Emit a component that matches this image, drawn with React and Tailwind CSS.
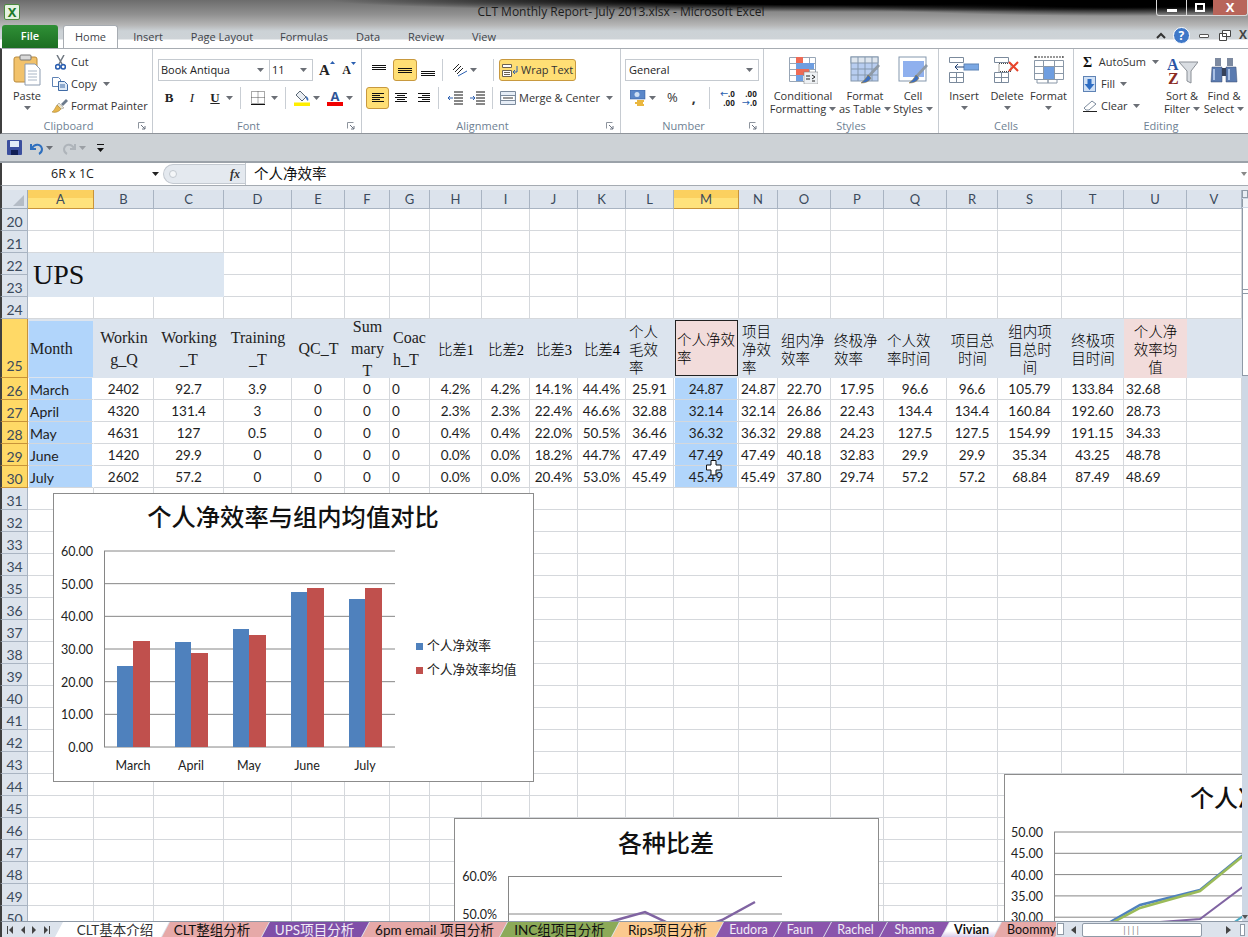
import React from "react";

const uiFont = "font-['Open_Sans','Noto_Sans_CJK_SC',sans-serif]";
const cellFont = "font-['Lato','Noto_Sans_CJK_SC',sans-serif]";
const serifFont = "font-['Liberation_Serif','Noto_Sans_CJK_SC',serif]";

const gridCols =
  "grid-cols-[28px_66px_60px_70px_68px_53px_45px_40px_52px_48px_48px_48px_48px_65px_39px_53px_53px_63px_51px_64px_62px_63px_55px]";
const letters = "ABCDEFGHIJKLMNOPQRSTUV".split("");

const headers = [
  { t: ["Month"], a: "left", bg: "sel" },
  { t: ["Workin", "g_Q"] },
  { t: ["Working", "_T"] },
  { t: ["Training", "_T"] },
  { t: ["QC_T"] },
  { t: ["Sum", "mary", "T"] },
  { t: ["Coac", "h_T"], a: "left" },
  { t: ["比差1"], cjk: true },
  { t: ["比差2"], cjk: true },
  { t: ["比差3"], cjk: true },
  { t: ["比差4"], cjk: true },
  { t: ["个人", "毛效", "率"], a: "left", cjk: true },
  { t: ["个人净效", "率"], a: "left", cjk: true, bg: "active" },
  { t: ["项目", "净效", "率"], a: "left", cjk: true },
  { t: ["组内净", "效率"], a: "left", cjk: true },
  { t: ["终极净", "效率"], a: "left", cjk: true },
  { t: ["个人效", "率时间"], a: "left", cjk: true },
  { t: ["项目总", "时间"], cjk: true },
  { t: ["组内项", "目总时", "间"], cjk: true },
  { t: ["终极项", "目时间"], cjk: true },
  { t: ["个人净", "效率均", "值"], cjk: true, bg: "pink" },
  { t: [] },
];

const data = {
  26: ["March", "2402", "92.7", "3.9", "0", "0", "0", "4.2%", "4.2%", "14.1%", "44.4%", "25.91", "24.87", "24.87", "22.70", "17.95", "96.6", "96.6", "105.79", "133.84", "32.68", ""],
  27: ["April", "4320", "131.4", "3", "0", "0", "0", "2.3%", "2.3%", "22.4%", "46.6%", "32.88", "32.14", "32.14", "26.86", "22.43", "134.4", "134.4", "160.84", "192.60", "28.73", ""],
  28: ["May", "4631", "127", "0.5", "0", "0", "0", "0.4%", "0.4%", "22.0%", "50.5%", "36.46", "36.32", "36.32", "29.88", "24.23", "127.5", "127.5", "154.99", "191.15", "34.33", ""],
  29: ["June", "1420", "29.9", "0", "0", "0", "0", "0.0%", "0.0%", "18.2%", "44.7%", "47.49", "47.49", "47.49", "40.18", "32.83", "29.9", "29.9", "35.34", "43.25", "48.78", ""],
  30: ["July", "2602", "57.2", "0", "0", "0", "0", "0.0%", "0.0%", "20.4%", "53.0%", "45.49", "45.49", "45.49", "37.80", "29.74", "57.2", "57.2", "68.84", "87.49", "48.69", ""],
};

const rows = [];
for (let r = 20; r <= 50; r++) rows.push(r);

function Caret({ className = "" }) {
  return (
    <svg width="7" height="4" viewBox="0 0 7 4" className={`shrink-0 ${className}`}>
      <path d="M0 0h7L3.5 4z" fill="#6b6f76" />
    </svg>
  );
}

function Divider() {
  return <div className="w-px h-[22px] bg-[#c9ced4] shrink-0" />;
}

function Launcher() {
  return (
    <svg width="8" height="8" viewBox="0 0 8 8" className="shrink-0">
      <path d="M.5.5h6M.5.5v6" stroke="#8e959e" fill="none" />
      <path d="M3 3l4 4M7 4v3H4" stroke="#6b7280" fill="none" />
    </svg>
  );
}

function Group({ label, launcher = true, className, children }) {
  return (
    <div className={`flex flex-col border-r border-[#c6cbd1] shrink-0 h-full ${className}`}>
      <div className="h-[69px] flex flex-col">{children}</div>
      <div className={`flex items-center h-[15px] ${launcher ? "pr-[6px]" : ""}`}>
        <div className={`flex-1 text-center text-[11px] leading-none text-[#6e7f93] ${launcher ? "pr-[3px]" : ""} ${uiFont}`}>{label}</div>
        {launcher && <Launcher />}
      </div>
    </div>
  );
}

function BigButton({ w, lines, caret = true, children }) {
  return (
    <div className={`flex flex-col items-center pt-[6px] shrink-0 ${w}`}>
      <div className="h-[30px] flex items-center justify-center">{children}</div>
      <div className={`mt-[4px] text-[11px] leading-[13px] text-[#333] text-center whitespace-nowrap ${uiFont}`}>
        {lines.map((l, i) => (
          <div key={i} className="flex items-center justify-center gap-[3px]">
            {l}
            {caret && lines.length > 1 && i === lines.length - 1 && <Caret />}
          </div>
        ))}
      </div>
      {caret && lines.length === 1 && <Caret className="mt-[4px]" />}
    </div>
  );
}

function AlignIcon({ kind }) {
  const w = [12, 8, 12, 8, 12];
  return (
    <svg width="14" height="12" viewBox="0 0 14 12">
      {w.map((x, i) => {
        const start = kind === "left" ? 1 : kind === "center" ? 7 - x / 2 : 13 - x;
        return <rect key={i} x={start} y={1 + i * 2} width={x} height="1" fill="#111" />;
      })}
    </svg>
  );
}

function VAlignIcon({ pos }) {
  const top = pos === "top" ? 1 : pos === "mid" ? 4 : 7;
  return (
    <svg width="14" height="12" viewBox="0 0 14 12">
      {[0, 2, 4].map((d) => (
        <rect key={d} x="0" y={top + d} width="14" height="1" fill="#111" />
      ))}
    </svg>
  );
}

function PasteIcon() {
  return (
    <svg width="28" height="32" viewBox="0 0 28 32">
      <rect x="1" y="3" width="23" height="25" rx="2" fill="#f2c26b" stroke="#b98a3c" />
      <rect x="7" y="1" width="11" height="5" rx="1" fill="#d9d9d9" stroke="#777" />
      <path d="M12 10h10l5 5v16H12z" fill="#fff" stroke="#8c9bb0" />
      <path d="M15 17h9M15 20h9M15 23h9M15 26h9" stroke="#a9b6c6" />
    </svg>
  );
}

function CutIcon() {
  return (
    <svg width="11" height="15" viewBox="0 0 11 15">
      <path d="M2 0l5 9M9 0L4 9" stroke="#6f7780" strokeWidth="1.5" />
      <circle cx="2.800" cy="11.800" r="2.200" fill="none" stroke="#2b5fb0" strokeWidth="1.600" />
      <circle cx="8.200" cy="11.800" r="2.200" fill="none" stroke="#2b5fb0" strokeWidth="1.600" />
    </svg>
  );
}

function CopyIcon() {
  return (
    <svg width="16" height="14" viewBox="0 0 16 14">
      <path d="M.5.5h6l2 2v7h-8z" fill="#fff" stroke="#5f83b5" />
      <path d="M6.5 4.5h6l3 3v6h-9z" fill="#dfeaf7" stroke="#3f6aa5" />
      <path d="M8 8h5M8 10h5" stroke="#3f6aa5" />
    </svg>
  );
}

function BrushIcon() {
  return (
    <svg width="16" height="14" viewBox="0 0 16 14">
      <path d="M9 5l5-5 2 2-5 5z" fill="#6c7b8c" />
      <path d="M7 4l5 5-3 1-4-4z" fill="#e9e3cf" stroke="#888" strokeWidth=".5" />
      <path d="M5 6l4 4c-2 3-6 4-9 3 2-1 3-4 5-7z" fill="#e7b64e" stroke="#a37b22" strokeWidth=".5" />
    </svg>
  );
}

function BordersIcon() {
  return (
    <svg width="14" height="14" viewBox="0 0 14 14">
      <path d="M.5.5h13v12h-13zM7 .5v12M.5 6.5h13" stroke="#555" strokeDasharray="1 1" fill="none" />
      <path d="M0 13.5h14" stroke="#111" />
    </svg>
  );
}

function FillIcon() {
  return (
    <svg width="16" height="16" viewBox="0 0 16 16">
      <path d="M6 1l6 6-4 4-6-6z" fill="#e9edf2" stroke="#5b6875" />
      <path d="M12 6c2 1 3 3 2 5-2-1-2-3-2-5z" fill="#3f6fb5" />
      <rect y="12.500" width="16" height="3.500" fill="#ffee00" />
    </svg>
  );
}

function CondIcon() {
  return (
    <svg width="30" height="28" viewBox="0 0 30 28">
      <path d="M1.5 1.5h26v24h-26zM1.5 7.5h26M1.5 13.5h26M1.5 19.5h26M8.5 1.500v24M14.5 1.500v24M21.5 1.500v24" fill="#fff" stroke="#98a6b6" />
      <rect x="8" y="1" width="7" height="6" fill="#ee6a55" />
      <rect x="8" y="7" width="18" height="6" fill="#6f9ee0" />
      <rect x="8" y="13" width="13" height="6" fill="#ee6a55" />
      <rect x="8" y="19" width="7" height="6" fill="#6f9ee0" />
      <rect x="16" y="16" width="14" height="12" fill="#eef1f4" stroke="#777" strokeWidth=".5" />
      <path d="M18 20h4M18 23h4M24 19l3 2-3 2M24 25h3" stroke="#222" fill="none" />
    </svg>
  );
}

function TableIcon() {
  return (
    <svg width="30" height="28" viewBox="0 0 30 28">
      <rect x="1" y="1" width="27" height="24" fill="#b8cdf0" stroke="#8497ad" />
      <rect x="1" y="1" width="27" height="6" fill="#dfe6ee" stroke="#8497ad" />
      <path d="M1 13h27M1 19h27M8 1v24M15 1v24M22 1v24" stroke="#8497ad" />
      <path d="M30 10L19 22l-2-2L28 8z" fill="#8e99a5" />
      <path d="M18 19l3 3c-2 4-6 5-10 5 3-2 5-5 7-8z" fill="#3d6fc0" stroke="#a37b22" strokeWidth=".5" />
    </svg>
  );
}

function CellStyleIcon() {
  return (
    <svg width="30" height="28" viewBox="0 0 30 28">
      <rect x="1" y="1" width="27" height="24" fill="#fff" stroke="#8497ad" />
      <rect x="5" y="5" width="21" height="16" fill="#8fb0ee" />
      <path d="M30 10L19 22l-2-2L28 8z" fill="#8e99a5" />
      <path d="M18 19l3 3c-2 4-6 5-10 5 3-2 5-5 7-8z" fill="#3d6fc0" stroke="#a37b22" strokeWidth=".5" />
    </svg>
  );
}

function InsertIcon() {
  return (
    <svg width="30" height="26" viewBox="0 0 30 26">
      <path d="M.5.5h14v5H.5zM.5 15.500h14v10H.5zM7.500 15.500v10M.5 20.500h14" fill="#fff" stroke="#7b8a9c" />
      <rect x="15" y="7" width="15" height="6" fill="#7aa7e3" stroke="#5e84b5" />
      <path d="M15 10H6m3-3l-3 3 3 3" stroke="#1f3f70" fill="none" />
    </svg>
  );
}

function DeleteIcon() {
  return (
    <svg width="26" height="26" viewBox="0 0 26 26">
      <path d="M.5.5h14v5H.5zM.5 15.500h14v10H.5zM7.500 15.500v10M.5 20.500h14" fill="#fff" stroke="#7b8a9c" />
      <rect x="5" y="6.500" width="12" height="8" fill="none" stroke="#444" strokeDasharray="1 1" />
      <path d="M15 5l9 9M24 5l-9 9" stroke="#e8432a" strokeWidth="2" />
    </svg>
  );
}

function FormatIcon() {
  return (
    <svg width="30" height="28" viewBox="0 0 30 28">
      <path d="M1 1h28M1 0v3M29 0v3" stroke="#333" strokeDasharray="2 1" />
      <path d="M.5 4.500h29v19H.5zM.5 10.500h29M.5 17.500h29M9.500 4.500v19M20.500 4.500v19" fill="#fff" stroke="#8a98a8" />
      <rect x="10" y="11" width="10" height="12" fill="#6f9ee0" />
      <path d="M3 24v3h11v-3M14 24v3h9v-3" fill="none" stroke="#8a98a8" />
    </svg>
  );
}

function SortIcon() {
  return (
    <svg width="31" height="29" viewBox="0 0 31 29">
      <path d="M12 6h19l-7 9v12l-4-2V15z" fill="#d9dde2" stroke="#8a8f96" />
      <text x="0" y="14" fontSize="16" fontWeight="700" fill="#2a55a5" className={serifFont}>A</text>
      <text x="1" y="28" fontSize="16" fontWeight="700" fill="#8a2a22" className={serifFont}>Z</text>
    </svg>
  );
}

function BinocularIcon() {
  return (
    <svg width="28" height="26" viewBox="0 0 28 26">
      <path d="M5 1h6v8H5zM17 1h6v8h-6z" fill="#7d8aa0" />
      <path d="M2 10h10v15H1zM16 10h10l1 15H16z" fill="#5b7bb0" stroke="#3c4f70" strokeWidth=".5" />
      <rect x="12" y="11" width="4" height="8" fill="#36425a" />
      <path d="M4 12v11M19 12v11" stroke="#a9c0e4" strokeWidth="2" />
    </svg>
  );
}

function Ribbon() {
  return (
    <div className="flex h-[87px] bg-white border-l-2 border-l-[#3f3f3f] border-t border-t-[#a7acb2] border-b border-b-[#8f949a]">
      <Group label="Clipboard" className="w-[151px]">
        <div className="flex">
          <BigButton w="w-[50px]" lines={["Paste"]}>
            <PasteIcon />
          </BigButton>
          <div className={`flex flex-col pt-[2px] text-[11px] text-[#333] ${uiFont}`}>
            <div className="h-[22px] flex items-center pl-[3px]"><CutIcon /><span className="ml-[5px]">Cut</span></div>
            <div className="h-[22px] flex items-center gap-[3px]"><CopyIcon /><span>Copy</span><Caret className="ml-[3px]" /></div>
            <div className="h-[22px] flex items-center gap-[3px]"><BrushIcon /><span className="whitespace-nowrap">Format Painter</span></div>
          </div>
        </div>
      </Group>
      <Group label="Font" className="w-[209px]">
        <div className="flex items-center pl-[5px] pt-[10px] h-[32px]">
          <div className={`w-[112px] h-[22px] border border-[#c5cad0] flex items-center pl-[2px] pr-[5px] text-[11px] text-[#222] ${uiFont}`}>
            <span className="flex-1">Book Antiqua</span><Caret />
          </div>
          <div className={`w-[43px] h-[22px] border border-l-0 border-[#c5cad0] flex items-center pl-[2px] pr-[5px] text-[11px] text-[#222] ${uiFont}`}>
            <span className="flex-1">11</span><Caret />
          </div>
          <div className={`ml-[3px] w-[22px] flex justify-center text-[15px] font-bold text-[#222] ${serifFont}`}>
            A<svg width="5" height="3" viewBox="0 0 5 3" className="mt-[2px]"><path d="M0 3h5L2.500 0z" fill="#2b5fb0" /></svg>
          </div>
          <div className={`w-[22px] flex justify-center text-[12px] font-bold text-[#222] ${serifFont}`}>
            A<svg width="5" height="3" viewBox="0 0 5 3" className="mt-[1px]"><path d="M0 0h5L2.500 3z" fill="#2b5fb0" /></svg>
          </div>
        </div>
        <div className="flex items-center h-[22px] mt-[6px] pl-[10px] text-[#222]">
          <span className={`w-[12px] text-center text-[13px] font-bold ${serifFont}`}>B</span>
          <span className={`ml-[11px] w-[12px] text-center text-[13px] italic ${serifFont}`}>I</span>
          <span className={`ml-[11px] w-[12px] text-center text-[13px] font-bold underline ${serifFont}`}>U</span>
          <Caret className="ml-[5px]" />
          <div className="ml-[7px]"><Divider /></div>
          <div className="ml-[10px]"><BordersIcon /></div>
          <Caret className="ml-[6px]" />
          <div className="ml-[7px]"><Divider /></div>
          <div className="ml-[8px]"><FillIcon /></div>
          <Caret className="ml-[3px]" />
          <div className="ml-[7px] w-[16px] flex flex-col items-center">
            <span className={`text-[13px] leading-[12px] font-bold text-[#2f5597] ${uiFont}`}>A</span>
            <div className="w-[16px] h-[4px] bg-[#f00000]" />
          </div>
          <Caret className="ml-[3px]" />
        </div>
      </Group>
      <Group label="Alignment" className="w-[259px]">
        <div className="flex items-center pt-[10px] h-[32px]">
          <div className="w-[28px] ml-[3px] flex justify-center"><VAlignIcon pos="top" /></div>
          <div className="w-[24px] h-[22px] flex items-center justify-center bg-[#ffdf75] border border-[#c8993f] rounded-[3px]"><VAlignIcon pos="mid" /></div>
          <div className="w-[22px] flex justify-center"><VAlignIcon pos="bot" /></div>
          <div className="ml-[3px]"><Divider /></div>
          <svg width="16" height="14" viewBox="0 0 16 14" className="ml-[9px]">
            <path d="M1 7l6-6M3 9l6-6M5 11l6-6" stroke="#222" />
            <path d="M6 13l9-5" stroke="#2b5fb0" />
          </svg>
          <Caret className="ml-[2px]" />
          <div className="ml-[16px]"><Divider /></div>
          <div className={`ml-[5px] w-[77px] h-[22px] flex items-center gap-[3px] pl-[2px] bg-[#ffdf75] border border-[#c8993f] rounded-[3px] text-[11px] text-[#333] ${uiFont}`}>
            <svg width="16" height="14" viewBox="0 0 16 14">
              <path d="M.5 1.500h9v3h-9zM.5 7.500h9v6h-9zM2 9.500h6M2 11.500h6" fill="#fff" stroke="#6b6250" />
              <path d="M15 3v6h-4m2-2l-2 2 2 2" fill="none" stroke="#2b5fb0" />
            </svg>
            <span className="whitespace-nowrap">Wrap Text</span>
          </div>
        </div>
        <div className="flex items-center h-[22px] mt-[6px]">
          <div className="ml-[4px] w-[23px] h-[22px] flex items-center justify-center bg-[#ffdf75] border border-[#c8993f] rounded-[3px]"><AlignIcon kind="left" /></div>
          <div className="ml-[4px] w-[16px] flex justify-center"><AlignIcon kind="center" /></div>
          <div className="ml-[7px] w-[16px] flex justify-center"><AlignIcon kind="right" /></div>
          <div className="ml-[6px]"><Divider /></div>
          <svg width="16" height="14" viewBox="0 0 16 14" className="ml-[9px]">
            <path d="M6 1h9M6 4h9M6 7h9M6 10h9M6 13h9" stroke="#111" />
            <path d="M5 7H0m2-2L0 7l2 2" stroke="#2b5fb0" fill="none" />
          </svg>
          <svg width="16" height="14" viewBox="0 0 16 14" className="ml-[6px]">
            <path d="M6 1h9M6 4h9M6 7h9M6 10h9M6 13h9" stroke="#111" />
            <path d="M0 7h5M3 5l2 2-2 2" stroke="#2b5fb0" fill="none" />
          </svg>
          <div className="ml-[6px]"><Divider /></div>
          <div className={`ml-[7px] flex items-center gap-[3px] text-[11px] text-[#333] ${uiFont}`}>
            <svg width="16" height="14" viewBox="0 0 16 14">
              <path d="M.5.5h15v13H.5zM.5 4.500h15M.5 9.500h15" fill="#e6edf6" stroke="#7b8a9c" />
              <rect x="2" y="5" width="12" height="4" fill="#fff" />
              <path d="M3 7h10" stroke="#333" />
            </svg>
            <span className="whitespace-nowrap">Merge &amp; Center</span>
            <Caret className="ml-[3px]" />
          </div>
        </div>
      </Group>
      <Group label="Number" className="w-[143px]">
        <div className="flex items-center pl-[4px] pt-[10px] h-[32px]">
          <div className={`w-[134px] h-[22px] border border-[#c5cad0] flex items-center pl-[3px] pr-[5px] text-[11px] text-[#222] ${uiFont}`}>
            <span className="flex-1">General</span><Caret />
          </div>
        </div>
        <div className="flex items-center h-[22px] mt-[6px] pl-[9px]">
          <svg width="16" height="16" viewBox="0 0 16 16">
            <rect x="0" y="0" width="15" height="9" fill="#5b87c9" stroke="#2f5597" strokeWidth=".5" />
            <circle cx="7" cy="4.500" r="2.500" fill="#cfe0f5" />
            <path d="M7 10h7v2H7zM5 12h8v2H5zM7 14h7v2H7z" fill="#eab73f" />
          </svg>
          <Caret className="ml-[3px]" />
          <span className={`ml-[11px] text-[13px] text-[#333] ${uiFont}`}>%</span>
          <span className={`ml-[14px] text-[14px] leading-[14px] font-bold text-[#333] ${uiFont}`}>,</span>
          <div className="ml-[13px]"><Divider /></div>
          <div className={`ml-[8px] w-[17px] text-[8px] leading-[9px] font-bold text-[#222] text-right ${uiFont}`}>
            <div><span className="text-[#2b5fb0]">←</span>.0</div><div>.00</div>
          </div>
          <div className={`ml-[5px] w-[17px] text-[8px] leading-[9px] font-bold text-[#222] text-right ${uiFont}`}>
            <div>.00</div><div><span className="text-[#2b5fb0]">→</span>.0</div>
          </div>
        </div>
      </Group>
      <Group label="Styles" launcher={false} className="w-[175px]">
        <div className="flex pl-[2px]">
          <BigButton w="w-[74px]" lines={["Conditional", "Formatting"]}><CondIcon /></BigButton>
          <BigButton w="w-[50px]" lines={["Format", "as Table"]}><TableIcon /></BigButton>
          <BigButton w="w-[46px]" lines={["Cell", "Styles"]}><CellStyleIcon /></BigButton>
        </div>
      </Group>
      <Group label="Cells" launcher={false} className="w-[135px]">
        <div className="flex pl-[4px]">
          <BigButton w="w-[42px]" lines={["Insert"]}><InsertIcon /></BigButton>
          <BigButton w="w-[44px]" lines={["Delete"]}><DeleteIcon /></BigButton>
          <BigButton w="w-[39px]" lines={["Format"]}><FormatIcon /></BigButton>
        </div>
      </Group>
      <Group label="Editing" launcher={false} className="flex-1 !border-r-0">
        <div className="flex">
          <div className={`flex flex-col pt-[2px] pl-[9px] w-[85px] text-[11px] text-[#333] ${uiFont}`}>
            <div className="h-[22px] flex items-center">
              <span className={`w-[18px] text-[14px] font-bold text-[#111] ${serifFont}`}>Σ</span>
              <span>AutoSum</span><Caret className="ml-[6px]" />
            </div>
            <div className="h-[22px] flex items-center">
              <div className="w-[18px]">
                <svg width="13" height="16" viewBox="0 0 13 16">
                  <rect x=".5" y=".5" width="12" height="15" fill="#cfe0f5" stroke="#5f83b5" />
                  <path d="M4.500 3h4v5h3l-5 6-5-6h3z" fill="#2f6ec4" />
                </svg>
              </div>
              <span>Fill</span><Caret className="ml-[5px]" />
            </div>
            <div className="h-[22px] flex items-center">
              <div className="w-[18px]">
                <svg width="14" height="12" viewBox="0 0 14 12">
                  <path d="M9 1l4 3-7 6H3L1 8z" fill="#fff" stroke="#7b8a9c" />
                  <path d="M0 11.500h14" stroke="#222" />
                </svg>
              </div>
              <span>Clear</span><Caret className="ml-[5px]" />
            </div>
          </div>
          <BigButton w="w-[46px]" lines={["Sort &", "Filter"]}><SortIcon /></BigButton>
          <BigButton w="w-[38px]" lines={["Find &", "Select"]}><BinocularIcon /></BigButton>
        </div>
      </Group>
    </div>
  );
}

function TitleArea() {
  return (
    <div className="h-[48px] flex flex-col bg-[radial-gradient(ellipse_520px_12px_at_68%_0%,#000_40%,#0000_100%),radial-gradient(ellipse_320px_16px_at_90%_0%,#000_45%,#0000_100%),linear-gradient(180deg,#6c6c6c_0px,#8f8f8f_14px,#b5b5b5_25px,#ccd2d6_31px,#ced3d7_39px,#fff_40px)]">
      <div className="h-[25px] flex items-start">
        <div className="w-[16px] h-[16px] mt-[4px] ml-[4px] bg-[#e6f2e2] border border-[#4c8a3f] text-[#1d7a2c] text-[13px] leading-[14px] font-bold text-center rounded-[2px]">X</div>
        <div className={`flex-1 text-center pl-[66px] pt-[3px] text-[12px] text-[#1c1c1c] ${uiFont}`}>CLT Monthly Report- July 2013.xlsx  -  Microsoft Excel</div>
        <div className="flex w-[92px] h-[16px] border border-t-0 border-[#d9d9d9] rounded-b-[3px] text-white">
          <div className="w-[29px] flex items-end justify-center pb-[3px]"><div className="w-[10px] h-[3px] bg-white" /></div>
          <div className="w-[27px] flex items-center justify-center border-l border-[#d9d9d9]"><div className="w-[10px] h-[9px] border-2 border-white" /></div>
          <div className="flex-1 flex items-center justify-center bg-[#b8655a] rounded-br-[3px] text-[13px] font-bold leading-none">X</div>
        </div>
      </div>
      <div className={`h-[23px] flex items-end text-[11px] text-[#3f444a] ${uiFont}`}>
        <div className="ml-[2px] w-[56px] h-[23px] flex items-center justify-center rounded-t-[3px] bg-[linear-gradient(180deg,#2f8f36,#1c6e22)] text-white font-semibold">File</div>
        <div className="ml-[5px] w-[55px] h-[23px] flex items-center justify-center rounded-t-[3px] bg-white border border-b-0 border-[#a7acb2]">Home</div>
        <div className="w-[60px] h-[23px] flex items-start pt-[4px] justify-center">Insert</div>
        <div className="w-[88px] h-[23px] flex items-start pt-[4px] justify-center">Page Layout</div>
        <div className="w-[76px] h-[23px] flex items-start pt-[4px] justify-center">Formulas</div>
        <div className="w-[52px] h-[23px] flex items-start pt-[4px] justify-center">Data</div>
        <div className="w-[64px] h-[23px] flex items-start pt-[4px] justify-center">Review</div>
        <div className="w-[52px] h-[23px] flex items-start pt-[4px] justify-center">View</div>
        <div className="ml-auto h-[23px] flex items-start pt-[2px] pr-[1px]">
          <svg width="10" height="8" viewBox="0 0 10 8" className="mt-[5px]"><path d="M1 6l4-4 4 4" fill="none" stroke="#333" strokeWidth="2" /></svg>
          <div className="ml-[7px] w-[17px] h-[17px] rounded-full bg-[#3f78c8] border border-white text-white text-[12px] leading-[15px] font-bold text-center">?</div>
          <div className="ml-[9px] mt-[7px] w-[10px] h-[4px] bg-white border border-[#555] rounded-[1px]" />
          <svg width="12" height="11" viewBox="0 0 12 11" className="ml-[10px] mt-[3px]">
            <path d="M3.500.5h8v6h-8zM.5 3.500h7v7h-7z" fill="#fff" stroke="#444" />
          </svg>
          <span className="ml-[8px] text-[12px] font-bold text-[#444] leading-[16px]">X</span>
        </div>
      </div>
    </div>
  );
}

function Toolbar() {
  return (
    <div className="h-[29px] flex items-center bg-[#cdd2d6] border-b-2 border-b-[#9ba2a9] pl-[7px]">
      <svg width="15" height="15" viewBox="0 0 15 15">
        <rect width="15" height="15" rx="1" fill="#3c4f9e" />
        <rect x="3" y="1" width="9" height="6" fill="#e4ecf7" />
        <rect x="4" y="10" width="7" height="5" fill="#111f55" />
      </svg>
      <svg width="15" height="14" viewBox="0 0 15 14" className="ml-[7px]">
        <path d="M2 3v5h5M3 7c3-5 9-4 10 1 0 2-1 4-3 5" fill="none" stroke="#2e6fbe" strokeWidth="2" />
      </svg>
      <Caret className="ml-[2px]" />
      <svg width="15" height="14" viewBox="0 0 15 14" className="ml-[9px]">
        <path d="M13 3v5H8M12 7C9 2 3 3 2 8c0 2 1 4 3 5" fill="none" stroke="#aeb4ba" strokeWidth="2" />
      </svg>
      <Caret className="ml-[2px] opacity-50" />
      <svg width="7" height="8" viewBox="0 0 7 8" className="ml-[11px]">
        <path d="M0 .5h7" stroke="#111" /><path d="M0 4h7L3.500 8z" fill="#111" />
      </svg>
    </div>
  );
}

function FormulaBar() {
  return (
    <div className="h-[23px] flex items-center bg-white border-b border-b-[#a5abb2] border-l-2 border-l-[#3f3f3f]">
      <div className={`w-[161px] flex items-center text-[12.5px] text-[#222] ${uiFont}`}>
        <span className="ml-[49px]">6R x 1C</span>
        <svg width="7" height="4" viewBox="0 0 7 4" className="ml-auto mr-[4px]"><path d="M0 0h7L3.500 4z" fill="#222" /></svg>
      </div>
      <div className="w-[82px] h-[20px] flex items-center bg-[#e4e9ef] border-l border-y border-[#c3c9d0] rounded-l-[10px] pl-[5px]">
        <div className="w-[8px] h-[8px] rounded-full bg-[#f4f6f8] border border-[#c3c9d0]" />
        <span className={`ml-auto mr-[5px] text-[12px] italic font-bold text-[#333] ${serifFont}`}>fx</span>
      </div>
      <div className="w-px h-full bg-[#c3c9d0]" />
      <div className={`pl-[8px] text-[14.5px] text-[#111] ${cellFont}`}>个人净效率</div>
      <svg width="6" height="4" viewBox="0 0 6 4" className="ml-auto mr-[1px]"><path d="M0 0h6L3 4z" fill="#888" /></svg>
    </div>
  );
}

function ColumnHeaders() {
  return (
    <>
      <div className="h-[19px] bg-[#dce3ec] border-r border-b border-[#9eaab8] border-l-2 border-l-[#3f3f3f] flex items-end justify-end pr-[3px] pb-[2px]">
        <svg width="11" height="11" viewBox="0 0 11 11"><path d="M11 0v11H0z" fill="#b4bcc6" /></svg>
      </div>
      {letters.map((l) => {
        const sel = l === "A" || l === "M";
        return (
          <div
            key={l}
            className={`h-[19px] pt-[1px] border-r border-b flex items-center justify-center text-[13px] text-[#3b4a5c] ${cellFont} ${
              sel
                ? "bg-[linear-gradient(180deg,#fbd05f_45%,#ffe27c_45%)] border-[#c8933a]"
                : "bg-[#dce3ec] border-[#a9b4c2]"
            }`}
          >
            {l}
          </div>
        );
      })}
    </>
  );
}

function HeaderCell({ h, i }) {
  const base = h.bg === "pink" ? "bg-[#f2dcdb]" : "bg-[#dce4ee]";
  const align = h.a === "left" ? "items-start pl-[3px]" : "items-center";
  const lineCls = h.cjk
    ? "text-[14.5px] leading-[18px] font-light text-black pt-[2px]"
    : "text-[16px] leading-[22px] text-[#222]";
  const inner = h.t.map((line, n) => <div key={n} className="whitespace-nowrap">{line}</div>);
  if (i === 0) {
    return (
      <div className={`h-[59px] ${base} border-b border-[#dce4ee] pl-[1px] pr-[1px] pt-[2px]`}>
        <div className={`h-full bg-[#b1d5fb] flex items-center pl-[1px] ${serifFont} text-[16px] text-[#222]`}>Month</div>
      </div>
    );
  }
  if (h.bg === "active") {
    return (
      <div className={`h-[59px] ${base} flex items-center pl-[1px] pr-[1px]`}>
        <div className={`w-full h-[56px] mt-[-1px] bg-[#f2dcdb] border border-[#222] flex flex-col justify-center pl-[1px] ${serifFont} ${lineCls}`}>{inner}</div>
      </div>
    );
  }
  return (
    <div className={`h-[59px] ${base} flex flex-col justify-center ${align} ${serifFont} ${lineCls}`}>{inner}</div>
  );
}

function Sheet() {
  return (
    <div className={`grid ${gridCols} w-[1242px] bg-white`}>
      <ColumnHeaders />
      {rows.map((r) => {
        const sel = r >= 25 && r <= 30;
        const h = r === 25 ? "h-[59px]" : "h-[22px]";
        const label = (
          <div
            key={`l${r}`}
            className={`${h} border-r border-b border-l-2 border-l-[#3f3f3f] flex justify-center text-[14px] text-[#3b4a5c] ${cellFont} ${
              r === 25 ? "items-end pb-[1px]" : "items-center pt-[3px]"
            } ${sel ? "bg-[#ffd966] border-r-[#c8933a] border-b-[#c8933a]" : "bg-[#dce3ec] border-r-[#a9b4c2] border-b-[#a9b4c2]"}`}
          >
            {r}
          </div>
        );
        if (r === 25) {
          return (
            <React.Fragment key={r}>
              {label}
              {headers.map((c, i) => <HeaderCell key={i} h={c} i={i} />)}
            </React.Fragment>
          );
        }
        if (data[r]) {
          return (
            <React.Fragment key={r}>
              {label}
              {data[r].map((v, i) => {
                const col = letters[i];
                if (col === "A" || col === "M") {
                  return (
                    <div key={i} className={`${h} border-r border-b ${col === "A" ? "border-r-white" : "border-r-[#d5d8dc]"} border-b-[#d5d8dc] pl-[1px] pr-[1px] bg-white`}>
                      <div className={`h-full pt-[2px] bg-[#b1d5fb] flex items-center text-[13.5px] text-[#1e1e1e] ${cellFont} ${col === "M" ? "justify-center" : "pl-[1px] text-[14px]"}`}>{v}</div>
                    </div>
                  );
                }
                const left = col === "G" || col === "U" || col === "N";
                return (
                  <div key={i} className={`${h} pt-[2px] border-r border-b border-[#d5d8dc] flex items-center text-[13.5px] text-[#1e1e1e] ${cellFont} ${left ? "pl-[2px]" : "justify-center"}`}>
                    {v}
                  </div>
                );
              })}
            </React.Fragment>
          );
        }
        if (r === 22) {
          return (
            <React.Fragment key={r}>
              {label}
              <div className={`col-span-3 row-span-2 bg-[#dce6f1] flex items-center pl-[5px] text-[28px] text-[#111] ${serifFont}`}>UPS</div>
              {letters.slice(3).map((c) => <div key={c} className={`${h} border-r border-b border-[#d5d8dc]`} />)}
            </React.Fragment>
          );
        }
        const cells = r === 23 ? letters.slice(3) : letters;
        return (
          <React.Fragment key={r}>
            {label}
            {cells.map((c) => <div key={c} className={`${h} border-r border-b border-[#d5d8dc]`} />)}
          </React.Fragment>
        );
      })}
    </div>
  );
}

const barData = [
  { x: 117, a: 666, b: 641, c: "March" },
  { x: 175, a: 642, b: 653, c: "April" },
  { x: 233, a: 629, b: 635, c: "May" },
  { x: 291, a: 592, b: 588, c: "June" },
  { x: 349, a: 599, b: 588, c: "July" },
];
const chartFont = { fontFamily: "Lato, 'Noto Sans CJK SC', sans-serif" };

function BarChart() {
  const ticks = ["60.00", "50.00", "40.00", "30.00", "20.00", "10.00", "0.00"];
  return (
    <div className="absolute left-[53px] top-[303px] w-[481px] h-[289px] bg-white border border-[#8c8c8c]">
      <svg width="479" height="287" viewBox="54 494 479 287" style={chartFont}>
        <text x="293" y="526" textAnchor="middle" fontSize="24.300" fill="#111" fontWeight="500">个人净效率与组内均值对比</text>
        {ticks.map((t, i) => {
          const y = 551 + i * 32.67;
          return (
            <g key={t}>
              <line x1="104" x2="395" y1={y} y2={y} stroke="#868686" />
              <text x="93" y={y + 5} textAnchor="end" fontSize="12.500" fill="#222">{t}</text>
            </g>
          );
        })}
        <line x1="104.500" x2="104.500" y1="551" y2="747" stroke="#868686" />
        {barData.map((b) => (
          <g key={b.c}>
            <rect x={b.x} y={b.a} width="16" height={747 - b.a} fill="#4f81bd" />
            <rect x={b.x + 16} y={b.b} width="17" height={747 - b.b} fill="#c0504d" />
            <text x={b.x + 16} y="770" textAnchor="middle" fontSize="12.500" fill="#222">{b.c}</text>
          </g>
        ))}
        <rect x="416" y="643" width="7" height="7" fill="#4f81bd" />
        <text x="427" y="650" fontSize="12.800" fill="#222">个人净效率</text>
        <rect x="416" y="667" width="7" height="7" fill="#c0504d" />
        <text x="427" y="674" fontSize="12.800" fill="#222">个人净效率均值</text>
      </svg>
    </div>
  );
}

function RatioChart() {
  return (
    <div className="absolute left-[454px] top-[628px] w-[425px] h-[120px] bg-white border border-[#8c8c8c]">
      <svg width="423" height="118" viewBox="455 819 423 118" style={chartFont}>
        <text x="666" y="852" textAnchor="middle" fontSize="24" fill="#111" fontWeight="500">各种比差</text>
        <text x="497" y="881" textAnchor="end" fontSize="12.500" fill="#222">60.0%</text>
        <text x="497" y="919" textAnchor="end" fontSize="12.500" fill="#222">50.0%</text>
        <line x1="508" x2="782" y1="876.500" y2="876.500" stroke="#868686" />
        <line x1="508" x2="782" y1="914" y2="914" stroke="#868686" />
        <line x1="508.500" x2="508.500" y1="876" y2="925" stroke="#868686" />
        <polyline points="600,925 620,919 645,912 668,923" fill="none" stroke="#8064a2" strokeWidth="2.500" />
        <polyline points="708,925 722,920 755,902" fill="none" stroke="#8064a2" strokeWidth="2.500" />
      </svg>
    </div>
  );
}

function TrendChart() {
  const ticks = ["50.00", "45.00", "40.00", "35.00", "30.00"];
  return (
    <div className="absolute left-[1004px] top-[584px] w-[260px] h-[170px] bg-white border border-[#8c8c8c]">
      <svg width="258" height="168" viewBox="1005 775 258 168" style={chartFont}>
        <text x="1190" y="807" fontSize="24" fill="#111" fontWeight="500">个人净效率</text>
        {ticks.map((t, i) => {
          const y = 832 + i * 21.3;
          return (
            <g key={t}>
              <line x1="1054" x2="1260" y1={y} y2={y} stroke="#868686" />
              <text x="1043" y={y + 5} textAnchor="end" fontSize="12.500" fill="#222">{t}</text>
            </g>
          );
        })}
        <line x1="1054.500" x2="1054.500" y1="832" y2="925" stroke="#868686" />
        <polyline points="1105,925 1140,905 1200,890 1248,851" fill="none" stroke="#4f81bd" strokeWidth="2.500" />
        <polyline points="1108,925 1140,908 1200,891 1248,852" fill="none" stroke="#9bbb59" strokeWidth="2.500" />
        <polyline points="1160,922 1200,919 1248,883" fill="none" stroke="#8064a2" strokeWidth="2" />
        <polyline points="1230,925 1248,913" fill="none" stroke="#4bacc6" strokeWidth="2" />
      </svg>
    </div>
  );
}

function CellCursor() {
  return (
    <svg width="16" height="16" viewBox="0 0 16 16" className="absolute left-[706px] top-[270px]">
      <path d="M5 .5h5v4.500h5v5h-5v5H5v-5H.5v-5H5z" fill="#fff" stroke="#111" />
    </svg>
  );
}

function VScroll() {
  return (
    <div className="w-[6px] flex flex-col bg-[#ced8e5]">
      <div className="h-[8px] bg-[#e8edf3] border border-[#8f9aa7]" />
      <div className="h-[8px] mt-[1px] bg-[#f1f4f8] border-l border-[#8f9aa7]" />
      <div className="h-[168px] mt-[1px] bg-white border-l border-b border-[#8f9aa7] flex flex-col justify-center">
        <div className="h-[5px] border-y border-[#8f9aa7]" />
      </div>
      <div className="mt-auto mb-[2px] flex justify-center">
        <svg width="6" height="4" viewBox="0 0 6 4"><path d="M0 0h6L3 4z" fill="#555" /></svg>
      </div>
    </div>
  );
}

const tabs = [
  { n: "CLT基本介绍", w: "w-[114px] pl-[6px]", c: "bg-white text-[#333] text-[13.5px]" },
  { n: "CLT整组分析", w: "w-[107px] pr-[7px]", c: "bg-[#e6a9a8] text-[#111] text-[13.5px]" },
  { n: "UPS项目分析", w: "w-[107px] pr-[2px]", c: "bg-[#7f4fa8] text-[#f1ecf6] text-[13.5px]" },
  { n: "6pm email 项目分析", w: "w-[145px]", c: "bg-[#e6a9a8] text-[#111] text-[13.5px]" },
  { n: "INC组项目分析", w: "w-[119px]", c: "bg-[#8caa58] text-[#111] text-[13.5px]" },
  { n: "Rips项目分析", w: "w-[111px]", c: "bg-[#fbc98e] text-[#111] text-[13.5px]" },
  { n: "Eudora", w: "w-[65px]", c: "bg-[#8a55ac] text-[#f1ecf6] text-[12.5px]" },
  { n: "Faun", w: "w-[57px] pr-[5px]", c: "bg-[#8a55ac] text-[#f1ecf6] text-[12.5px]" },
  { n: "Rachel", w: "w-[63px]", c: "bg-[#8a55ac] text-[#f1ecf6] text-[12.5px]" },
  { n: "Shanna", w: "w-[69px]", c: "bg-[#8a55ac] text-[#f1ecf6] text-[12.5px]" },
  { n: "Vivian", w: "w-[59px]", c: "bg-[linear-gradient(180deg,#fff_60%,#d9c9e8)] text-[#111] font-bold text-[12.5px]" },
  { n: "Boommy", w: "w-[69px] pl-[6px]", c: "bg-[#e6a9a8] text-[#111] text-[12.5px]" },
];

function BottomBar() {
  return (
    <div className="h-[16px] flex bg-[#dce3ec] border-t border-t-[#8f9aa7] border-l-2 border-l-[#3f3f3f]">
      <div className="w-[53px] flex items-center justify-between pl-[5px] pr-[5px] text-[#333]">
        <svg width="6" height="8" viewBox="0 0 6 8"><path d="M0 0h1v8H0zM6 0v8L2 4z" fill="#444" /></svg>
        <svg width="4" height="8" viewBox="0 0 4 8"><path d="M4 0v8L0 4z" fill="#444" /></svg>
        <svg width="4" height="8" viewBox="0 0 4 8"><path d="M0 0v8l4-4z" fill="#444" /></svg>
        <svg width="6" height="8" viewBox="0 0 6 8"><path d="M5 0h1v8H5zM0 0v8l4-4z" fill="#444" /></svg>
      </div>
      <div className={`w-[1001px] flex overflow-hidden ${cellFont}`}>
        {tabs.map((t, i) => (
          <div
            key={t.n}
            className={`${t.w} ${t.c} ${i > 0 ? "ml-[-7px]" : ""} shrink-0 h-[15px] pt-[1px] flex items-center justify-center whitespace-nowrap leading-[14px] [clip-path:polygon(8px_0,100%_0,calc(100%-8px)_100%,0_100%)]`}
          >
            {t.n}
          </div>
        ))}
      </div>
      <div className="w-[7px] h-[12px] mt-[1px] ml-[1px] bg-white border border-[#8f9aa7]" />
      <div className="flex-1 flex items-center pl-[7px] pr-[3px]">
        <svg width="5" height="8" viewBox="0 0 5 8" className="mr-[6px]"><path d="M5 0v8L0 4z" fill="#444" /></svg>
        <div className="w-[120px] h-[14px] pr-[22px] bg-white border border-[#8f9aa7] rounded-[2px] flex items-center justify-center text-[8px] leading-none text-[#777]">||||</div>
        <div className="flex-1" />
        <svg width="5" height="8" viewBox="0 0 5 8" className="mr-[9px]"><path d="M0 0v8l5-4z" fill="#444" /></svg>
        <div className="w-[5px] h-[12px] bg-white border border-[#8f9aa7]" />
      </div>
    </div>
  );
}

export default function App() {
  return (
    <div className="w-[1248px] h-[937px] overflow-hidden flex flex-col bg-white">
      <TitleArea />
      <Ribbon />
      <Toolbar />
      <FormulaBar />
      <div className="h-[4px] bg-[#e7ebf0] border-l-2 border-l-[#3f3f3f]" />
      <div className="flex h-[731px]">
        <div className="relative w-[1242px] overflow-hidden">
          <Sheet />
          <BarChart />
          <RatioChart />
          <TrendChart />
          <CellCursor />
        </div>
        <VScroll />
      </div>
      <BottomBar />
    </div>
  );
}
